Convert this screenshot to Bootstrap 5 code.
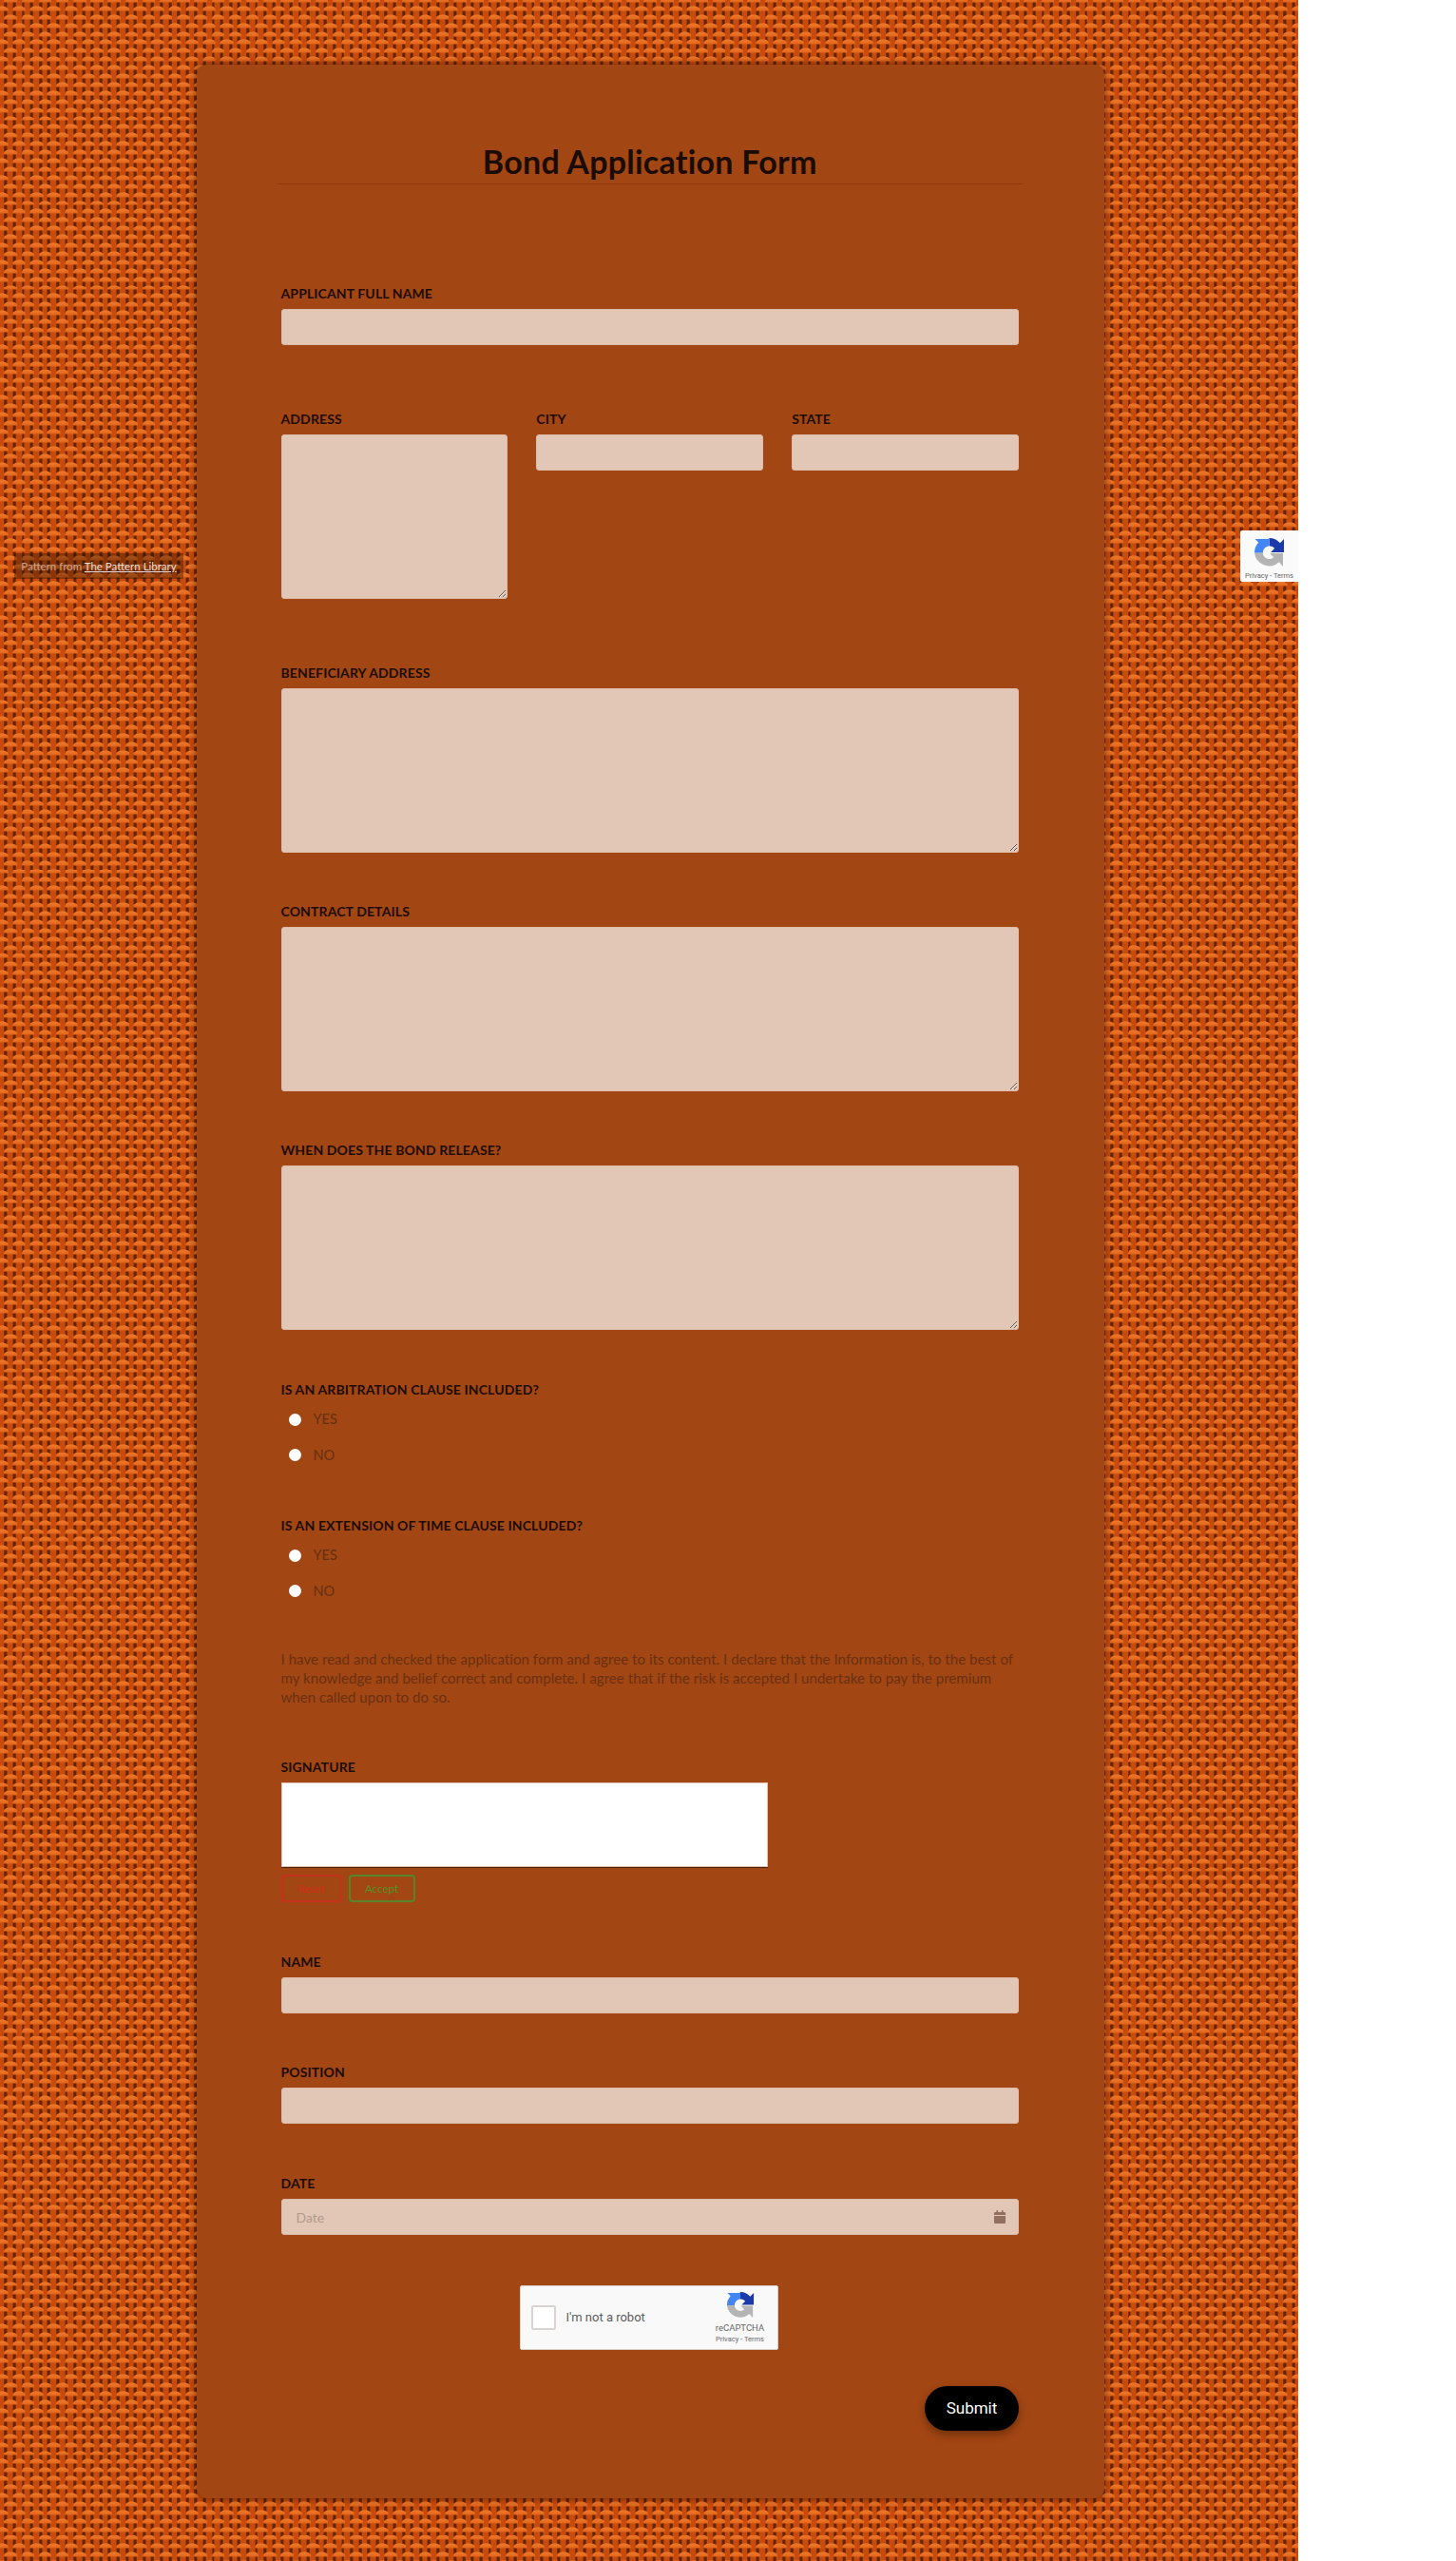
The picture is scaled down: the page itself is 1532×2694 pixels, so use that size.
<!DOCTYPE html>
<html lang="en">
<head>
<meta charset="utf-8">
<title>Bond Application Form</title>
<link rel="stylesheet" href="https://cdn.jsdelivr.net/npm/bootstrap@5.3.0/dist/css/bootstrap.min.css">
<style>
html,body{background:#fff;margin:0;padding:0}
body{font-family:"Lato","Noto Sans",sans-serif}
.weave-page{position:relative;width:1366px;height:2694px;padding-top:68px;overflow:hidden;
 background-color:#b8470a;
 background-image:url("data:image/svg+xml,%3Csvg xmlns='http://www.w3.org/2000/svg' width='18.2' height='17.8' viewBox='0 0 18 18'%3E%3Cdefs%3E%3ClinearGradient id='g' x1='0' y1='0' x2='0' y2='1'%3E%3Cstop offset='0' stop-color='%23f07b2b'/%3E%3Cstop offset='1' stop-color='%23e0641c'/%3E%3C/linearGradient%3E%3Cfilter id='b' x='-10%25' y='-10%25' width='120%25' height='120%25'%3E%3CfeGaussianBlur stdDeviation='.35'/%3E%3C/filter%3E%3C/defs%3E%3Crect width='18' height='18' fill='%23602406'/%3E%3Cg filter='url(%23b)'%3E%3Cg fill='%23c84c0a'%3E%3Crect x='-3' y='-2' width='6' height='22'/%3E%3Crect x='6' y='-2' width='6' height='22'/%3E%3Crect x='15' y='-2' width='6' height='22'/%3E%3C/g%3E%3Cg fill='url(%23g)'%3E%3Cpath d='M2.700 6.300C2.700 3.500 6 2.400 9.500 2.400S16.300 3.500 16.300 6.300V7.500H2.700Z'/%3E%3Cpath d='M-6.300 15.300C-6.300 12.500-3 11.400 .5 11.400S7.300 12.500 7.300 15.300V16.500H-6.300Z'/%3E%3Cpath d='M11.700 15.300C11.700 12.500 15 11.400 18.500 11.400S25.300 12.500 25.300 15.300V16.500H11.700Z'/%3E%3C/g%3E%3C/g%3E%3C/svg%3E");
 background-size:18.2px 17.8px;background-position:1.5px -5px}
.sheet{width:955px;margin-left:207px;height:2560px;padding:84px 90px 0 88.500px;background:#a24613;border-radius:10px;box-shadow:0 0 8px rgba(30,10,0,.6)}
.sheet-title{font-size:34px;line-height:38px;font-weight:700;letter-spacing:.25px;color:#1a0c04;text-align:center;margin:-1px -4px 0;padding-bottom:4px;border-bottom:1px solid rgba(60,25,5,.22);font-family:"Lato",sans-serif}
.fld-label{display:block;font-size:14px;letter-spacing:.12px;line-height:16px;font-weight:700;color:#1c0c04;text-transform:uppercase;margin-bottom:8px}
.fld-input.form-control{height:38px;background:#e2c7b6;border:1px solid #dcbca8;border-radius:3px;font-size:14px;padding:6px 15px}
.fld-input.form-control::placeholder{color:#b2998a;opacity:1}
textarea.fld-input.form-control{height:173px;min-height:173px}
.gap-a{margin-top:106.600px}.gap-b{margin-top:70px}.gap-c{margin-top:54.400px}
.gap-d{margin-top:55px}.gap-e{margin-top:48px}.gap-f{margin-top:42.500px}.gap-g{margin-top:56px}.gap-g2{margin-top:55.500px}
.gap-h{margin-top:54px}.gap-i{margin-top:55px}.gap-j{margin-top:53px}.gap-k{margin-top:38px}
.trio{--bs-gutter-x:30px}
.pick{display:flex;align-items:center;height:37.500px;margin:0;padding:0 0 0 8px;gap:13px;color:#66300f;font-size:14.500px}
.pick .form-check-input{margin:0;float:none;width:13px;height:13px;background-color:#fff;border:0;flex:none}
.picks{margin-top:-4px}
.pledge{margin-bottom:0;font-size:15px;letter-spacing:.06px;line-height:20px;color:#6a3011;white-space:nowrap}
.sig-pad{width:512px;height:89px;background:#fff;border:1px solid #e2c2b0;box-shadow:0 1px 0 #4d1f07}
.sig-acts{display:flex;gap:7px;margin-top:8px}
.sig-btn.btn{height:29px;padding:0 4px;font-size:11.500px;line-height:25px;border-width:2px;border-radius:4px;background:transparent;font-weight:500}
.sig-reset.btn{width:64px;color:#d0301a;border-color:#c4321e}
.sig-ok.btn{width:70px;color:#5c8d23;border-color:#55862a}
.date-wrap{position:relative}
.date-ico{position:absolute;right:14px;top:12px;width:12px;height:14px;display:block}
.robot-box{width:272px;height:68px;margin-left:251px;background:#f9f9f9;border:1px solid #d6d0cc;border-radius:2px;display:flex;align-items:center;padding:0 12px 0 11px;font-family:Roboto,sans-serif;color:#5c5c5c}
.robot-check{width:26px;height:26px;background:#fff;border:2px solid #d8d3d0;border-radius:2px;flex:none}
.robot-txt{font-size:13px;margin-left:11px;flex:1;margin-top:-2px}
.robot-side{width:54px;display:flex;flex-direction:column;align-items:center;line-height:1}
.robot-side svg{width:30px;height:30px;margin-top:-2px}
.robot-name{font-size:9.500px;color:#666;margin-top:4px}
.robot-links{font-size:7.500px;color:#666;margin-top:3px;white-space:nowrap}
.send-row{display:flex;justify-content:flex-end}
.send-btn.btn{width:99px;height:47px;background:#000;color:#fff;border:0;border-radius:24px;font-size:17px;font-family:Roboto,sans-serif;padding:0;box-shadow:0 4px 8px rgba(50,20,0,.45)}
.credit{position:absolute;left:15px;top:582px;width:178px;height:27px;background:rgba(30,10,0,.36);color:#c9a593;font-size:11.500px;line-height:27px;text-align:center;white-space:nowrap}
.credit a{color:#eadfd8}
.float-robot{position:absolute;left:1305px;top:558px;width:61px;height:54px;background:#fafafa;border-radius:2px 0 0 2px;display:flex;flex-direction:column;align-items:center;font-family:Roboto,sans-serif;line-height:1}
.float-robot svg{width:33px;height:33px;margin-top:7px}
.float-robot span{font-size:7.500px;color:#666;margin-top:4px;white-space:nowrap}
</style>
</head>
<body>
<svg width="0" height="0" class="d-block" aria-hidden="true"><defs>
<symbol id="rc" viewBox="0 0 64 64">
<path fill="#b4b4b4" d="M2 32H19A13 13 0 0 0 41 41L33 33H60V60L52 51A30 30 0 0 1 2 32Z"/>
<path fill="#1c3aa9" d="M32 2A30 30 0 0 1 54 12L62 4V31H35L43 23A14 14 0 0 0 32 18Z"/>
<path fill="#4285f4" d="M32 2V18A14 14 0 0 0 19 32H2A30 30 0 0 1 10 11L3 4H30Z"/>
</symbol></defs></svg>
<div class="weave-page">
<form class="sheet" onsubmit="return false">
  <h1 class="sheet-title">Bond Application Form</h1>

  <div class="gap-a">
    <label class="fld-label">Applicant Full Name</label>
    <input class="form-control fld-input" type="text">
  </div>

  <div class="row trio gap-b">
    <div class="col-4"><label class="fld-label">Address</label><textarea class="form-control fld-input"></textarea></div>
    <div class="col-4"><label class="fld-label">City</label><input class="form-control fld-input" type="text"></div>
    <div class="col-4"><label class="fld-label">State</label><input class="form-control fld-input" type="text"></div>
  </div>

  <div class="gap-b">
    <label class="fld-label">Beneficiary Address</label>
    <textarea class="form-control fld-input"></textarea>
  </div>
  <div class="gap-c">
    <label class="fld-label">Contract Details</label>
    <textarea class="form-control fld-input"></textarea>
  </div>
  <div class="gap-c">
    <label class="fld-label">When does the bond release?</label>
    <textarea class="form-control fld-input"></textarea>
  </div>

  <div class="gap-d">
    <label class="fld-label">Is an arbitration clause included?</label>
    <div class="picks">
      <label class="form-check pick"><input class="form-check-input" type="radio" name="arb"> YES</label>
      <label class="form-check pick"><input class="form-check-input" type="radio" name="arb"> NO</label>
    </div>
  </div>
  <div class="gap-e">
    <label class="fld-label">Is an extension of time clause included?</label>
    <div class="picks">
      <label class="form-check pick"><input class="form-check-input" type="radio" name="ext"> YES</label>
      <label class="form-check pick"><input class="form-check-input" type="radio" name="ext"> NO</label>
    </div>
  </div>

  <p class="pledge gap-f">I have read and checked the application form and agree to its content. I declare that the Information is, to the best of<br>my knowledge and belief correct and complete. I agree that if the risk is accepted I undertake to pay the premium<br>when called upon to do so.</p>

  <div class="gap-g">
    <label class="fld-label">Signature</label>
    <div class="sig-pad"></div>
    <div class="sig-acts">
      <button type="button" class="btn sig-btn sig-reset">Reset</button>
      <button type="button" class="btn sig-btn sig-ok">Accept</button>
    </div>
  </div>

  <div class="gap-g2">
    <label class="fld-label">Name</label>
    <input class="form-control fld-input" type="text">
  </div>
  <div class="gap-h">
    <label class="fld-label">Position</label>
    <input class="form-control fld-input" type="text">
  </div>
  <div class="gap-i">
    <label class="fld-label">Date</label>
    <div class="date-wrap">
      <input class="form-control fld-input" type="text" placeholder="Date">
      <svg class="date-ico" viewBox="0 0 12 14"><path fill="#92705f" d="M2.500 0h1.500v2h4V0h1.500v2H11a1 1 0 0 1 1 1v2H0V3a1 1 0 0 1 1-1h1.500zM0 6h12v7a1 1 0 0 1-1 1H1a1 1 0 0 1-1-1z"/></svg>
    </div>
  </div>

  <div class="robot-box gap-j">
    <span class="robot-check"></span>
    <span class="robot-txt">I'm not a robot</span>
    <div class="robot-side">
      <svg><use href="#rc"/></svg>
      <span class="robot-name">reCAPTCHA</span>
      <span class="robot-links">Privacy - Terms</span>
    </div>
  </div>

  <div class="send-row gap-k"><button class="btn send-btn" type="submit">Submit</button></div>
</form>

<div class="credit">Pattern from <a href="#">The Pattern Library</a></div>
<div class="float-robot"><svg><use href="#rc"/></svg><span>Privacy - Terms</span></div>
</div>
<script src="https://cdn.jsdelivr.net/npm/bootstrap@5.3.0/dist/js/bootstrap.bundle.min.js"></script>
</body>
</html>
